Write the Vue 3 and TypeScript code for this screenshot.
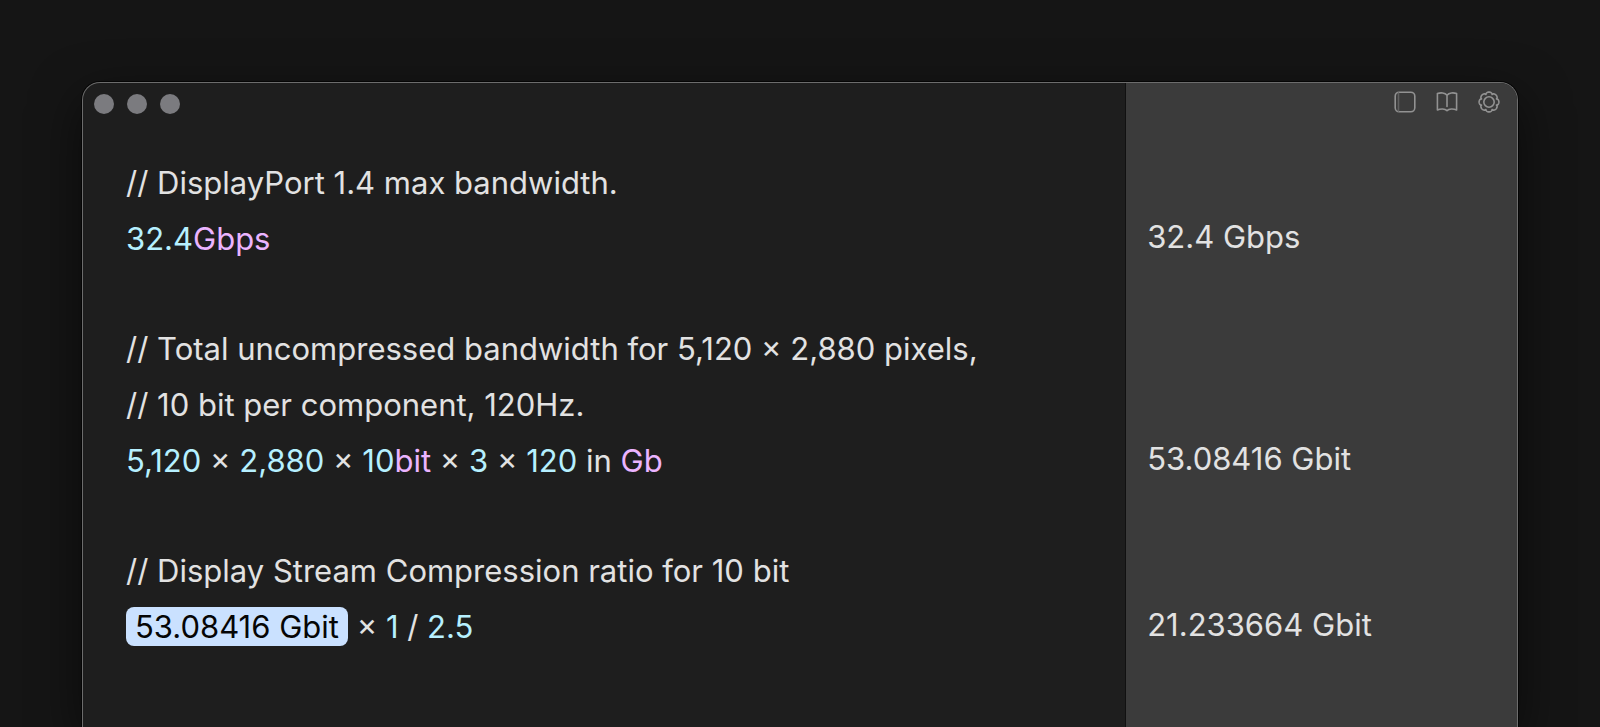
<script setup lang="ts">
type Kind = 'plain' | 'number' | 'unit' | 'answer'

interface Token {
  text: string
  kind: Kind
}

interface Line {
  tokens: Token[]
  result: string
}

const plain = (text: string): Token => ({ text, kind: 'plain' })
const num = (text: string): Token => ({ text, kind: 'number' })
const unit = (text: string): Token => ({ text, kind: 'unit' })
const answer = (text: string): Token => ({ text, kind: 'answer' })

const lines: Line[] = [
  { tokens: [plain('// DisplayPort 1.4 max bandwidth.')], result: '' },
  { tokens: [num('32.4'), unit('Gbps')], result: '32.4 Gbps' },
  { tokens: [], result: '' },
  { tokens: [plain('// Total uncompressed bandwidth for 5,120 × 2,880 pixels,')], result: '' },
  { tokens: [plain('// 10 bit per component, 120Hz.')], result: '' },
  {
    tokens: [
      num('5,120'), plain(' × '), num('2,880'), plain(' × '), num('10'), unit('bit'),
      plain(' × '), num('3'), plain(' × '), num('120'), plain(' in '), unit('Gb'),
    ],
    result: '53.08416 Gbit',
  },
  { tokens: [], result: '' },
  { tokens: [plain('// Display Stream Compression ratio for 10 bit')], result: '' },
  {
    tokens: [answer('53.08416 Gbit'), plain(' × '), num('1'), plain(' / '), num('2.5')],
    result: '21.233664 Gbit',
  },
]

const windowControls = ['Close', 'Minimize', 'Zoom']

// Scalloped outline with eight lobes around the centre of the 22-unit view box.
const gearPath = (() => {
  const steps = 96
  const points: string[] = []
  for (let i = 0; i < steps; i++) {
    const a = (i / steps) * Math.PI * 2
    const r = 8.1 + 1.8 * Math.sqrt(Math.abs(Math.cos(4 * a)))
    points.push(`${(11 + r * Math.cos(a)).toFixed(2)} ${(11 + r * Math.sin(a)).toFixed(2)}`)
  }
  return `M${points.join('L')}Z`
})()
</script>

<template>
  <div class="desktop">
    <main class="window">
      <section class="editor" aria-label="Editor">
        <header class="bar">
          <button
            v-for="name in windowControls"
            :key="name"
            type="button"
            class="light"
            :aria-label="name"
          ></button>
        </header>
        <div class="lines">
          <p v-for="(line, i) in lines" :key="i" class="line" :class="{ blank: !line.tokens.length }"><span v-for="(token, j) in line.tokens" :key="j" :class="token.kind">{{ token.text }}</span></p>
        </div>
      </section>

      <aside class="results" aria-label="Results">
        <header class="bar tools">
          <button type="button" class="tool" aria-label="Toggle sidebar">
            <svg viewBox="0 0 22 22">
              <rect x="1.2" y="1.2" width="19.6" height="19.6" rx="4" />
              <path d="M4.5 2V20" class="faint" />
            </svg>
          </button>
          <button type="button" class="tool" aria-label="Documentation">
            <svg viewBox="0 0 22 22">
              <path d="M11 4.2C9 1.6 4.5 1.4 1.4 2.6V19C4.5 17.6 9 17.6 11 19.6C13 17.6 17.5 17.6 20.6 19V2.6C17.5 1.4 13 1.6 11 4.2V15.5" />
            </svg>
          </button>
          <button type="button" class="tool" aria-label="Settings">
            <svg viewBox="0 0 22 22">
              <path :d="gearPath" />
              <circle cx="11" cy="11" r="5.2" />
            </svg>
          </button>
        </header>
        <div class="lines">
          <p v-for="(line, i) in lines" :key="i" class="line" :class="{ blank: !line.tokens.length }">
            <output v-if="line.result">{{ line.result }}</output>
          </p>
        </div>
      </aside>
    </main>
  </div>
</template>

<style>
body {
  background: #151515;
}
</style>

<style scoped>
.desktop {
  box-sizing: border-box;
  display: flex;
  min-height: 100vh;
  padding: 82px 82px 0;
  overflow: hidden;
  font-family: Inter, 'Liberation Sans', sans-serif;
  font-size: 31px;
  color: #e2e2e2;
}

.window {
  box-sizing: border-box;
  flex: 1;
  display: grid;
  grid-template-columns: minmax(0, 266fr) minmax(0, 100fr);
  overflow: hidden;
  border: 1px solid #6c6c6c;
  border-bottom: 0;
  border-radius: 18px 18px 0 0;
  background: #1e1e1e;
  box-shadow: 0 0 0 1px #050505, 0 16px 50px rgba(0, 0, 0, 0.55);
}

.editor {
  padding: 0 43px;
}

.results {
  padding: 0 17px 0 21px;
  background: #3b3b3b;
  border-left: 1px solid #111;
}

.bar {
  display: flex;
  align-items: center;
  gap: 13px;
  height: 42px;
  margin-left: -32px;
}

.light {
  width: 20px;
  height: 20px;
  padding: 0;
  border: 0;
  border-radius: 50%;
  background: #7b7b7f;
}

.tools {
  justify-content: flex-end;
  gap: 20px;
  height: 38px;
  margin-left: 0;
}

.tool {
  width: 22px;
  height: 22px;
  padding: 0;
  border: 0;
  background: none;
}

.tool svg {
  display: block;
  width: 22px;
  height: 22px;
  fill: none;
  stroke: #929292;
  stroke-width: 1.6;
  stroke-linejoin: round;
  stroke-linecap: round;
}

.tool .faint {
  stroke: #606060;
}

.lines {
  padding-top: 30px;
}

.results .lines {
  padding-top: 32px;
}

.line {
  height: 56px;
  margin: 0;
  line-height: 56px;
  white-space: pre;
}

.line.blank {
  height: 54px;
}

.number {
  color: #b6f0ff;
}

.unit {
  color: #ebb4ff;
}

.answer {
  padding: 1px 9px;
  border-radius: 8px;
  background: #cae1ff;
  color: #050505;
}
</style>
